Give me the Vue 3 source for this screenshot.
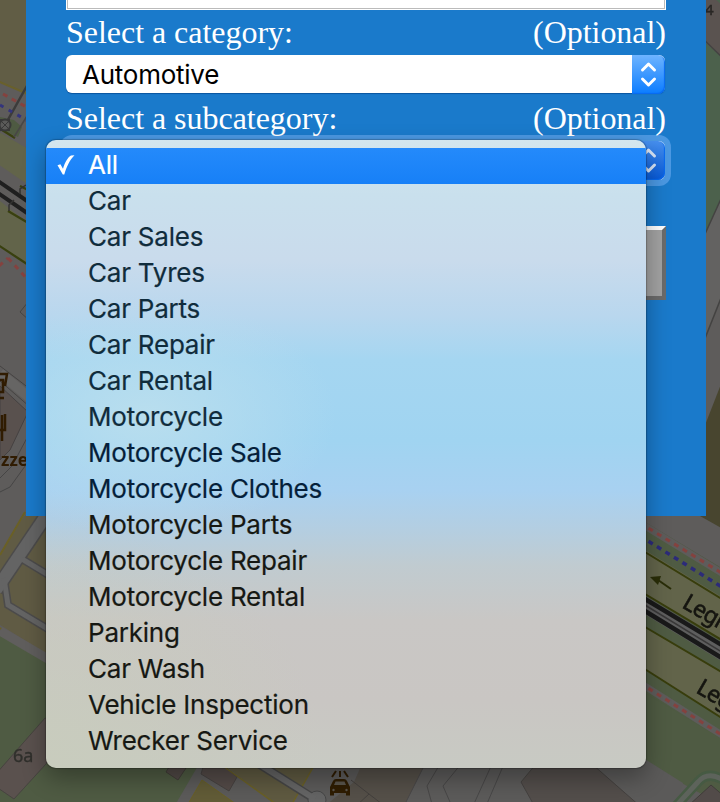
<script setup>
const items = ['All', 'Car', 'Car Sales', 'Car Tyres', 'Car Parts', 'Car Repair', 'Car Rental', 'Motorcycle', 'Motorcycle Sale', 'Motorcycle Clothes', 'Motorcycle Parts', 'Motorcycle Repair', 'Motorcycle Rental', 'Parking', 'Car Wash', 'Vehicle Inspection', 'Wrecker Service']
</script>

<template>
  <main class="screen">
    <svg class="map" width="720" height="802" viewBox="0 0 720 802">
      <rect x="-5" y="-5" width="730" height="812" fill="#5e5c5b" />
      <!-- west side -->
      <path d="M-5 -5H30V95L-5 80Z" fill="#615d45" />
      <path d="M-5 80L30 95" stroke="#69602c" stroke-width="2" />
      <path d="M0 117L14 120 22 127 18 137 0 129Z" fill="#4e5a42" />
      <path d="M-5 130L30 150V186L-5 162Z" fill="#62644a" />
      <path d="M-5 197L30 225V267L-5 244Z" fill="#62644a" />
      <path d="M2 130L15 138M-5 243L30 266M8 211L30 224M20 186L30 191" stroke="#39400f" stroke-width="2.2" />
      <path d="M-5 179L30 203M-5 191L30 215" stroke="#1f1f1f" stroke-width="4" />
      <path d="M26 185L20 189V194M14 200L9 205V211" fill="none" stroke="#333231" stroke-width="1.5" />
      <path d="M5 125L28 84" stroke="#3c3b3a" stroke-width="2.5" />
      <path d="M14 137L27 116M5 125L-3 134" stroke="#484746" stroke-width="1.5" />
      <path d="M0 119H10V131H0Z" fill="#383838" /><circle cx="5" cy="125" r="5.5" fill="#5a5a59" stroke="#383838" stroke-width="2" />
      <path d="M1 121L9 129M9 121L1 129" stroke="#383838" />
      <path d="M3 94L30 109M8 258L30 282M-1 266L8 258" stroke="#84423f" stroke-width="3" stroke-dasharray="5 5" fill="none" />
      <path d="M0 105L28 121" stroke="#34347c" stroke-width="3" stroke-dasharray="4 6" />
      <path d="M28 302L20 312 30 321M0 366L30 389M0 381L30 407" fill="none" stroke="#454443" />
      <path d="M0 373L30 398" stroke="#666564" stroke-width="10" />
      <path d="M0 386L28 412 10 450 0 460Z" fill="#59514e" stroke="#454141" />
      <path d="M28 436L12 466 0 478M28 462L10 487 0 492" fill="none" stroke="#464545" />
      <!-- lower-left blocks -->
      <path d="M24 516L60 506V662L0 625V554Z" fill="#605b44" />
      <path d="M25 512L0 555M0 628L60 664" stroke="#6a6026" stroke-width="2" fill="none" />
      <path d="M52 507L-4 590" fill="none" stroke="#4c4b4b" stroke-width="15" />
      <path d="M22 559L60 582M4 578L8 605 58 635" fill="none" stroke="#4c4b4b" stroke-width="8" />
      <path d="M52 507L-4 590" stroke="#646464" stroke-width="12" />
      <path d="M22 559L60 582M4 578L8 605 58 635" stroke="#646464" stroke-width="5" fill="none" />
      <path d="M0 635L220 765V807H-5V632Z" fill="#4f5b43" />
      <path d="M0 631L60 666" stroke="#605e5d" stroke-width="9" />
      <path d="M-5 775L45 718 77 730 14 799 -5 786Z" fill="#5a514e" stroke="#474440" />
      <text x="13" y="762" class="house">6a</text>
      <!-- southern blocks -->
      <path d="M199 764H720V807H174Z" fill="#5c5b5a" />
      <path d="M166 772L172 762 186 768 178 780Z" fill="#514946" stroke="#413e38" />
      <path d="M188 804L202 780 236 804Z" fill="#625c37" stroke="#6a6026" />
      <path d="M204 764H222L237 777 229 791 201 774Z" fill="#544b48" stroke="#464240" />
      <path d="M223 764H315L292 804H274Z" fill="#5f5a41" />
      <path d="M315 764L292 804M223 766L276 804" stroke="#6a6026" stroke-width="1.5" />
      <path d="M259 764L313 798" stroke="#464646" stroke-width="9" />
      <circle cx="317" cy="800" r="9" fill="#646464" stroke="#464646" />
      <path d="M259 764L315 799" stroke="#656565" stroke-width="6" />
      <path d="M354 782L362 764H425L404 806H325L354 782Z" fill="#555049" />
      <path d="M351 780L369 794 356 806M369 794L382 804" fill="none" stroke="#44403d" />
      <path d="M425 764L404 806M440 764L427 786 432 804M461 764L443 786 450 802M492 764L473 806M504 764L486 806" fill="none" stroke="#484747" />
      <path d="M536 764H592L641 807H535L521 782Z" fill="#534e4b" stroke="#454240" />
      <g fill="#2f1d02">
        <path d="M330 787L333 781Q334 779 336 779H344Q346 779 347 781L350 787V795.5H346V793H334V795.5H330Z" />
        <path d="M335.5 781.5H344.5L346 785H334Z" fill="#5a554d" />
        <circle cx="333.5" cy="790" r="1.2" fill="#5a554d" /><circle cx="346.5" cy="790" r="1.2" fill="#5a554d" />
        <path d="M336 771L332 777M340 771V777M344 771L348 777" stroke="#2f1d02" stroke-width="2" />
      </g>
      <!-- north-east -->
      <path d="M700 38L725 60V198L700 245Z" fill="#4c614c" />
      <path d="M700 -5H725V60L700 36Z" fill="#5a5350" />
      <path d="M711 -5H725V8Z" fill="#4c614c" />
      <path d="M725 190L700 245V350L725 290Z" fill="#636261" />
      <path d="M700 36L725 60M725 190L700 245M725 288L700 351" stroke="#444342" stroke-width="1.5" />
      <path d="M725 374L700 438V516L725 530Z" fill="#48452f" />
      <text x="705" y="15" class="lot">4</text>
      <!-- railway corridor -->
      <g>
        <path d="M640 519L725 570V745L640 694Z" fill="#4f5b43" />
        <path d="M640 547L725 599V642L640 591Z" fill="#62644a" />
        <path d="M640 625L725 674V720L640 666Z" fill="#62644a" />
        <path d="M640 549L725 601M640 591L725 642M640 624L725 674M640 666L725 720" stroke="#383d0c" stroke-width="2" />
        <path d="M640 602L725 654" stroke="#5e5e5e" stroke-width="16" />
        <path d="M640 596L725 647M640 608L725 660" stroke="#191919" stroke-width="4.5" />
        <path d="M640 602L725 654" stroke="#393838" stroke-width="1.5" />
        <path d="M640 523L725 575M640 683L725 737" stroke="#5e5c5b" stroke-width="7" />
        <path d="M640 523L725 575M640 683L725 737" stroke="#84423f" stroke-width="3" stroke-dasharray="5 5" />
        <path d="M640 536L725 589" stroke="#2c2b79" stroke-width="3.5" stroke-dasharray="5 5" />
        <path d="M640 690L725 741V807L640 760Z" fill="#4f5b43" />
        <path d="M640 756L683 783 675 807H640V760Z" fill="#5b5a59" />
        <path d="M676 806L698 782Q708 770 725 781" fill="none" stroke="#465a43" stroke-width="10" />
        <path d="M676 806L698 782Q708 770 725 781" fill="none" stroke="#5d635b" stroke-width="5" />
        <path d="M688 806L711 785 725 797V806Z" fill="#524b49" stroke="#403d39" />
        <path d="M658 580L671 589" stroke="#292d08" stroke-width="2" /><path d="M650 577L661 576 658 585Z" fill="#292d08" />
        <text x="681" y="607" transform="rotate(30 681 607)" class="street">Legn</text>
        <text x="695" y="692" transform="rotate(30 695 692)" class="street">Leg</text>
      </g>
      <g stroke="#301c02" stroke-width="2.5" fill="none"><path d="M-1 374H7L5 386M-1 380H3V392H-1M0 398H4M5 414V430H-1M2 415V441" /></g>
      <text x="1" y="466" class="pizza">zze</text>
    </svg>

    <section class="panel">
      <div class="search"></div>
      <div class="label"><span>Select a category:</span><span>(Optional)</span></div>
      <div class="select">
        <span class="value">Automotive</span>
        <span class="stepper"><svg width="33" height="39" viewBox="0 0 33 39"><path d="M10.5 15L16.5 9 22.5 15M10.5 24L16.5 30 22.5 24" /></svg></span>
      </div>
      <div class="label second"><span>Select a subcategory:</span><span>(Optional)</span></div>
      <div class="select active">
        <span class="value"></span>
        <span class="stepper"><svg width="33" height="39" viewBox="0 0 33 39"><path d="M10.5 15L16.5 9 22.5 15M10.5 24L16.5 30 22.5 24" /></svg></span>
      </div>
      <button class="submit" type="button"></button>
    </section>

    <ul class="menu">
      <li v-for="(item, i) in items" :key="item" :class="{ selected: i === 0, cool: i > 0 && i < 10, deep: i > 7 && i < 10 }">
        <svg v-if="i === 0" class="check" width="20" height="22" viewBox="0 0 20 22"><path d="M1.5 11.2L4.4 10.3 7 14.8C9 8 12 3.2 15 1.5L18.5 1.2C13.5 6 10.5 13 8.3 20.5H6.8Z" /></svg>
        <span>{{ item }}</span>
      </li>
    </ul>
  </main>
</template>

<style>
body { margin: 0; overflow: hidden; }
</style>

<style scoped>
.screen { position: relative; width: 720px; height: 802px; overflow: hidden; }
.map { position: absolute; inset: 0; filter: blur(0.7px); }
.house { font: 18px "Noto Sans", sans-serif; fill: #30302c; stroke: #30302c; stroke-width: 0.4px; }
.lot { font: 15px "Noto Sans", sans-serif; fill: #292725; stroke: #292725; stroke-width: 0.5px; }
.street { font: 23px "Noto Sans", sans-serif; letter-spacing: -0.7px; fill: #151510; stroke: #151510; stroke-width: 0.6px; }
.pizza { font: bold 17px "Noto Sans", sans-serif; fill: #301c02; }
.panel { position: relative; box-sizing: border-box; width: 680px; height: 516px; margin-left: 26px; padding: 0 40px; background: #1a7acb; }
.search { box-sizing: border-box; height: 10px; border: 1px solid #fff; border-top: 0; background: #fff; box-shadow: inset 1px -1px #bbb, inset -1px 0 #bbb; }
.label { display: flex; justify-content: space-between; height: 44px; font: 32px/44px "Liberation Serif", serif; letter-spacing: -0.03px; color: #fff; }
.label.second { height: 48px; line-height: 48px; }
.select { display: flex; width: 599px; height: 38px; margin-top: 1px; margin-bottom: 1px; border-radius: 6px; background: #fff; box-shadow: 0 1px 1px #0b559f; font: 26px/39px Inter, sans-serif; }
.value { flex: 1; padding-left: 16px; color: #000; letter-spacing: -0.25px; }
.stepper { width: 33px; height: 39px; margin-top: -0.5px; border-radius: 0 7px 7px 0; background: linear-gradient(#6eb4ff, #0a7cff); box-shadow: inset -1px -1px 1px #086af0; }
.select .stepper svg { display: block; fill: none; stroke: #fff; stroke-width: 3; stroke-linecap: round; stroke-linejoin: round; }
.select.active { height: 39px; margin-top: -1px; margin-bottom: 0; box-shadow: 0 0 0 6px #4b98e2; }
.active .stepper { background: linear-gradient(#468fee, #075ad9); }
.active .stepper svg { stroke: #d8e5f7; }
.submit { display: block; width: 600px; height: 74px; margin: 46px 0 0; border: 4px solid; border-color: #fff #6b6b6b #6b6b6b #fff; background: #a2a2a2; }
.menu { position: absolute; left: 46px; top: 140px; box-sizing: border-box; width: 600px; height: 628px; margin: 0; padding: 8px 0; list-style: none; border-radius: 10px; overflow: hidden; color: #161813; font: 26px/36px Inter, sans-serif; box-shadow: 0 0 1px 1px rgba(0,0,0,.22), 0 10px 24px rgba(0,0,0,.33);
  background: radial-gradient(ellipse 190px 120px at 100px 275px, #b9deee 0%, #b9deee00 100%), radial-gradient(ellipse 280px 250px at 0 628px, #c8ccbd 0%, #c8ccbd00 100%), linear-gradient(#d3e6ee 0, #c9e0ed 55px, #c9dbec 120px, #b9d7ee 175px, #a5d6f1 220px, #a0d4f1 300px, #a8d1f1 350px, #b4cee1 390px, #c0cbd0 425px, #c9c7c5 480px, #c9c6c3 560px, #c8cac3 628px); }
.menu li { position: relative; height: 36px; padding-left: 42px; white-space: nowrap; letter-spacing: -0.22px; line-height: 34px; -webkit-text-stroke: 0.2px; }
.menu .cool { color: #102c3c; }
.menu .deep { color: #051f3a; }
.menu .selected { color: #fff; background: linear-gradient(#248afb, #1780f7); }
.check { position: absolute; left: 10px; top: 6px; fill: #fff; }
</style>
